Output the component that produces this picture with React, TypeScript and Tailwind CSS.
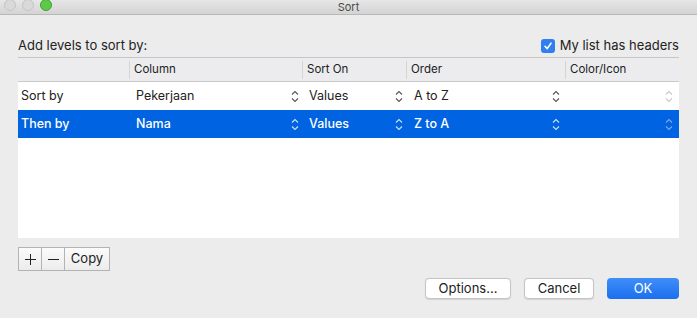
const font = { fontFamily: 'Inter, "Noto Sans", "Liberation Sans", sans-serif' };

function Updown({ faint = false, light = false }: { faint?: boolean; light?: boolean }) {
  const color = light ? (faint ? "#7fa8ea" : "#cfe0fa") : faint ? "#c8c8c8" : "#555555";
  return (
    <svg width="8" height="13" viewBox="0 0 8 13" fill="none" stroke={color} strokeWidth="1.1">
      <path d="M1 4.5 L4 1.5 L7 4.5" />
      <path d="M1 8.5 L4 11.5 L7 8.5" />
    </svg>
  );
}

function Row({ label, col, on, order, selected }: { label: string; col: string; on: string; order: string; selected?: boolean }) {
  const text = selected ? "text-white font-medium" : "text-[#222]";
  return (
    <div className={`flex h-[28px] items-center text-[12.5px] ${selected ? "bg-[#0063e1]" : "bg-white"} ${text}`}>
      <div className="w-[112px] pl-[3px]">{label}</div>
      <div className="flex w-[173px] items-center justify-between pl-[6px] pr-[4px]">
        <span>{col}</span>
        <Updown light={selected} />
      </div>
      <div className="flex w-[104px] items-center justify-between pl-[6px] pr-[4px]">
        <span>{on}</span>
        <Updown light={selected} />
      </div>
      <div className="flex w-[159px] items-center justify-between pl-[7px] pr-[6px]">
        <span>{order}</span>
        <Updown light={selected} />
      </div>
      <div className="flex flex-1 items-center justify-end pr-[6px]">
        <Updown faint light={selected} />
      </div>
    </div>
  );
}

export default function App() {
  return (
    <div className="flex h-[318px] w-[697px] flex-col overflow-hidden bg-[#ececec]" style={font}>
      {/* Title bar */}
      <div className="relative flex h-[15px] items-center justify-center border-b border-[#b8b8b8] bg-gradient-to-b from-[#e6e6e6] to-[#d4d4d4]">
        <div className="absolute left-[4px] top-[-1px] flex gap-[6px]">
          <div className="h-[12px] w-[12px] rounded-full border border-[#c4c4c4] bg-[#d9d9d9]" />
          <div className="h-[12px] w-[12px] rounded-full border border-[#c4c4c4] bg-[#d9d9d9]" />
          <div className="h-[12px] w-[12px] rounded-full border border-[#3aa52e] bg-[#5fc84a]" />
        </div>
        <span className="text-[11px] leading-none text-[#4a4a4a]">Sort</span>
      </div>

      <div className="flex flex-1 flex-col px-[18px] pt-[21px]">
        {/* Top line */}
        <div className="flex h-[20px] items-center justify-between text-[13px] text-[#222]">
          <span>Add levels to sort by:</span>
          <label className="flex items-center gap-[5px]">
            <span className="flex h-[14px] w-[14px] items-center justify-center rounded-[3px] bg-[#2f7ff0]">
              <svg width="10" height="10" viewBox="0 0 10 10" fill="none" stroke="white" strokeWidth="1.6" strokeLinecap="round" strokeLinejoin="round">
                <path d="M2 5.3 L4.2 7.6 L8 2.2" />
              </svg>
            </span>
            <span>My list has headers</span>
          </label>
        </div>

        {/* Table */}
        <div className="mt-[1px] flex h-[181px] flex-col border-t border-[#c6c6c6] bg-white">
          <div className="flex h-[24px] items-center border-b border-[#cacaca] bg-[#ececef] text-[11.5px] text-[#222]">
            <div className="w-[111px]" />
            <div className="h-[18px] w-px bg-[#d4d4d4]" />
            <div className="w-[172px] pl-[4px]">Column</div>
            <div className="h-[18px] w-px bg-[#d4d4d4]" />
            <div className="w-[103px] pl-[4px]">Sort On</div>
            <div className="h-[18px] w-px bg-[#d4d4d4]" />
            <div className="w-[158px] pl-[4px]">Order</div>
            <div className="h-[18px] w-px bg-[#d4d4d4]" />
            <div className="flex-1 pl-[4px]">Color/Icon</div>
          </div>
          <Row label="Sort by" col="Pekerjaan" on="Values" order="A to Z" />
          <Row label="Then by" col="Nama" on="Values" order="Z to A" selected />
        </div>

        {/* Segmented +/- Copy */}
        <div className="mt-[9px] flex h-[24px] w-[92px] border border-[#b3b3b3] bg-gradient-to-b from-[#fbfbfb] to-[#ececec] text-[13px] text-[#222]">
          <div className="flex w-[23px] items-center justify-center border-r border-[#b3b3b3]">
            <svg width="11" height="11" viewBox="0 0 11 11" stroke="#222" strokeWidth="1">
              <path d="M5.5 0 V11 M0 5.5 H11" />
            </svg>
          </div>
          <div className="flex w-[23px] items-center justify-center border-r border-[#b3b3b3]">
            <svg width="11" height="11" viewBox="0 0 11 11" stroke="#222" strokeWidth="1">
              <path d="M0 5.5 H11" />
            </svg>
          </div>
          <div className="flex flex-1 items-center justify-center">Copy</div>
        </div>

        {/* Dialog buttons */}
        <div className="mt-[7px] flex justify-end gap-[13px] text-[13px]">
          <button className="h-[21px] w-[86px] rounded-[4px] border border-[#c4c4c4] bg-white text-[#222] shadow-[0_0.5px_1px_rgba(0,0,0,0.1)]">
            Options...
          </button>
          <button className="h-[21px] w-[70px] rounded-[4px] border border-[#c4c4c4] bg-white text-[#222] shadow-[0_0.5px_1px_rgba(0,0,0,0.1)]">
            Cancel
          </button>
          <button className="h-[21px] w-[72px] rounded-[4px] bg-gradient-to-b from-[#3f8ef8] to-[#1a6ef0] text-white">
            OK
          </button>
        </div>
      </div>
    </div>
  );
}
